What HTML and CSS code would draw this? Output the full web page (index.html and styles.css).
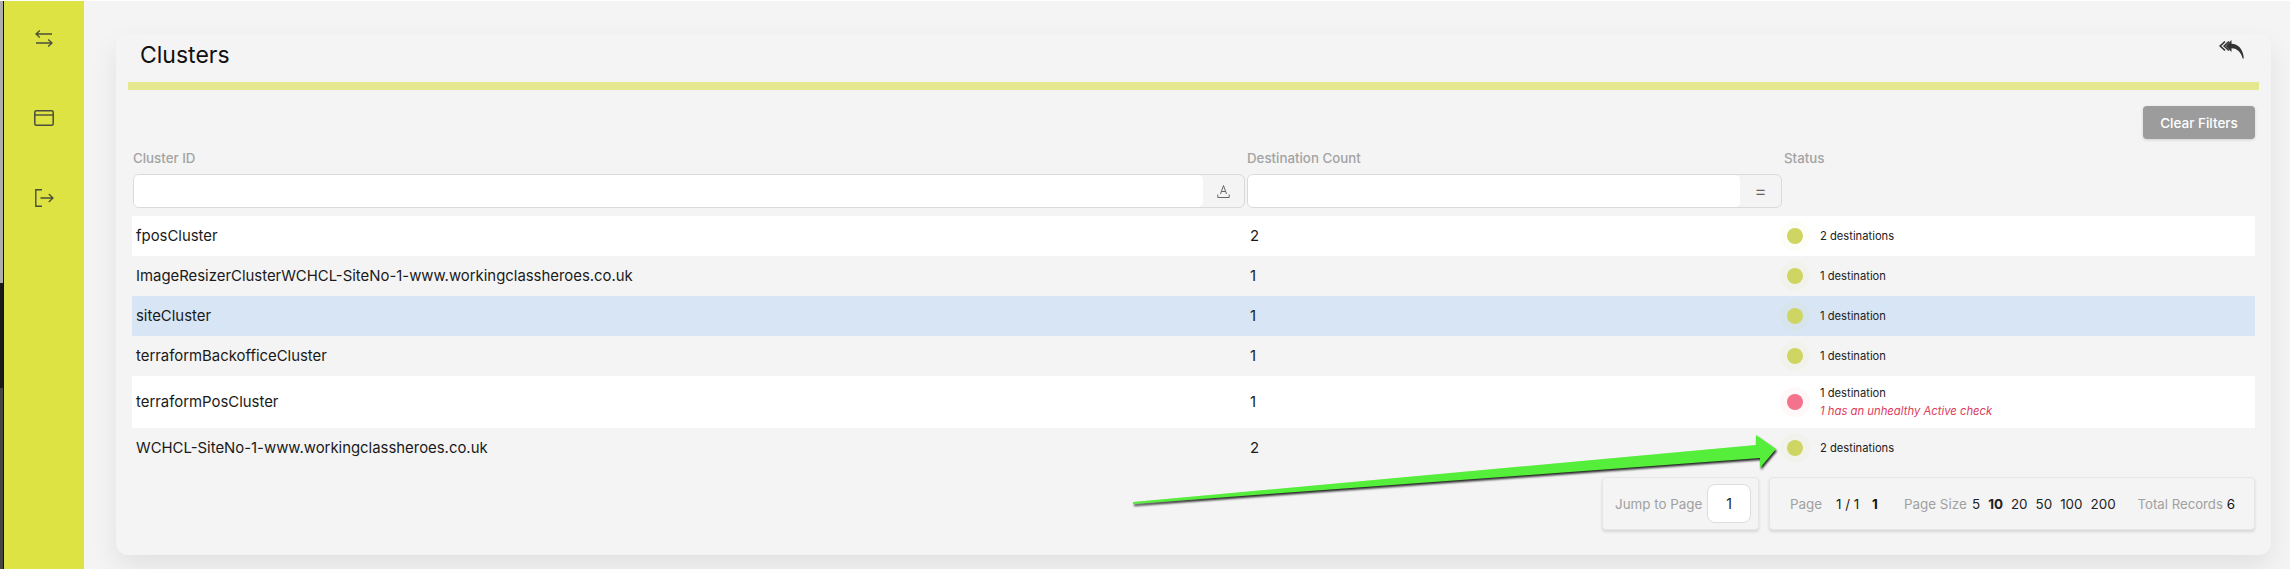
FILE: index.html
```html
<!DOCTYPE html>
<html lang="en">
<head>
<meta charset="utf-8">
<title>Clusters</title>
<link rel="stylesheet" href="styles.css">
</head>
<body>
<div class="edge"></div>
<nav class="sidebar">
  <a class="nav-icon nav-first"><svg width="18" height="17" viewBox="0 0 18 17"><path d="M4.800 .6 1 4.000 4.800 7.400M1 4.000H17M13.200 9.600 17 13 13.200 16.400M17 13H1" fill="none" stroke="#4a4e3a" stroke-width="1.300"/></svg></a>
  <a class="nav-icon"><svg width="20" height="16" viewBox="0 0 20 16"><rect x=".8" y=".8" width="18.400" height="14.400" rx="1.500" fill="none" stroke="#4a4e3a" stroke-width="1.500"/><path d="M.8 5H19.200" stroke="#4a4e3a" stroke-width="1.400"/></svg></a>
  <a class="nav-icon"><svg width="19" height="18" viewBox="0 0 19 18"><path d="M7 .8H.8V17.200H7" fill="none" stroke="#4a4e3a" stroke-width="1.400"/><path d="M5.500 9H18M13.800 5 18 9 13.800 13" fill="none" stroke="#4a4e3a" stroke-width="1.300"/></svg></a>
</nav>
<main class="main">
  <section class="card">
    <header class="card-head">
      <h1 class="title">Clusters</h1>
      <svg class="back" width="25" height="19" viewBox="0 0 25 19"><path d="M6 1.500 1.200 6 6 10.500" fill="none" stroke="#333" stroke-width="1.700"/><path d="M10 1.500 5.200 6 10 10.500" fill="none" stroke="#333" stroke-width="1.700"/><path d="M12.500 0 6.800 6 12.500 12V8.300C17.500 8.300 22 11.500 23.600 18.500L24.800 18.500C24.300 9 19 4 12.500 3.800Z" fill="#333"/></svg>
    </header>
    <div class="bar"></div>
    <div class="toolbar"><button class="clear">Clear Filters</button></div>
    <div class="grid-head">
      <div class="col col-id">
        <div class="label">Cluster ID</div>
        <div class="filter"><div class="filter-input"></div><div class="filter-op"><svg width="13" height="15" viewBox="0 0 13 15"><path d="M3.500 10 6.500 1.500 9.500 10M4.500 7.500H8.500" fill="none" stroke="#666" stroke-width="1"/><path d="M.8 10.500V13.500H12.200V10.500" fill="none" stroke="#666" stroke-width="1"/></svg></div></div>
      </div>
      <div class="col col-count">
        <div class="label">Destination Count</div>
        <div class="filter"><div class="filter-input"></div><div class="filter-op eq">=</div></div>
      </div>
      <div class="col col-status">
        <div class="label">Status</div>
      </div>
    </div>
    <div class="rows">
      <div class="row alt"><div class="cell-id">fposCluster</div><div class="cell-count">2</div><div class="cell-status"><span class="dot ok"></span><div class="status-text">2 destinations</div></div></div>
      <div class="row"><div class="cell-id">ImageResizerClusterWCHCL-SiteNo-1-www.workingclassheroes.co.uk</div><div class="cell-count">1</div><div class="cell-status"><span class="dot ok"></span><div class="status-text">1 destination</div></div></div>
      <div class="row selected"><div class="cell-id">siteCluster</div><div class="cell-count">1</div><div class="cell-status"><span class="dot ok"></span><div class="status-text">1 destination</div></div></div>
      <div class="row"><div class="cell-id">terraformBackofficeCluster</div><div class="cell-count">1</div><div class="cell-status"><span class="dot ok"></span><div class="status-text">1 destination</div></div></div>
      <div class="row alt tall"><div class="cell-id">terraformPosCluster</div><div class="cell-count">1</div><div class="cell-status"><span class="dot bad"></span><div class="status-text">1 destination<div class="warn">1 has an unhealthy Active check</div></div></div></div>
      <div class="row"><div class="cell-id">WCHCL-SiteNo-1-www.workingclassheroes.co.uk</div><div class="cell-count">2</div><div class="cell-status"><span class="dot ok"></span><div class="status-text">2 destinations</div></div></div>
    </div>
    <footer class="pager">
      <div class="pager-box jump"><span class="muted">Jump to Page</span><span class="jump-input">1</span></div>
      <div class="pager-box info">
        <span class="muted page-lbl">Page</span><span class="val pg">1 / 1</span><b class="val one">1</b>
        <span class="muted size">Page Size</span>
        <span class="val s">5</span><b class="val s">10</b><span class="val s">20</span><span class="val s">50</span><span class="val s">100</span><span class="val s">200</span>
        <span class="muted total">Total Records</span><span class="val six">6</span>
      </div>
    </footer>
  </section>
</main>
<svg class="arrow" width="670" height="90" viewBox="0 0 670 90">
  <path d="M1 72 624 15 624 5 644 19 628 38 628 28 1 74Z" fill="#55ee3a"/>
</svg>
</body>
</html>
```
FILE: styles.css
```css
* { box-sizing: border-box; }
html, body { margin: 0; height: 569px; overflow: hidden; }
body { display: flex; padding-top: 1px; font-family: "Inter", "Liberation Sans", sans-serif; background: #fff; color: #111; position: relative; }
.edge { width: 4px; flex: none; border-right: 1px solid #111; background: linear-gradient(#adadad 0 282px, #1a1a1a 282px 387px, #444 387px); }
.sidebar { width: 80px; flex: none; background: #dde343; display: flex; flex-direction: column; align-items: center; padding-top: 29px; gap: 63px; }
.nav-icon { display: flex; }
.main { flex: 1; background: #f4f4f4; padding: 33px 19px 14px 32px; }
.card { height: 521px; background: #f4f4f4; border-radius: 12px; box-shadow: 0 12px 28px rgba(0,0,0,.08); padding: 0 12px; }
.card-head { height: 48px; display: flex; justify-content: space-between; align-items: flex-start; padding: 5px 15px 0 12px; }
.title { margin: 0; font-size: 23px; line-height: 32px; font-weight: 400; color: #111; }
.back { margin-top: 1px; }
.bar { height: 8px; background: #e6e88f; }
.toolbar { display: flex; justify-content: flex-end; padding: 16px 4px 0 0; height: 49px; }
.clear { width: 112px; height: 33px; border: 0; border-radius: 4px; background: #9c9c9c; color: #fff; font: 500 13.500px "Inter", "Liberation Sans", sans-serif; box-shadow: 0 1px 3px rgba(0,0,0,.15); }
.grid-head { display: flex; padding-left: 5px; height: 77px; }
.col-id { width: 1114px; }
.col-count { width: 537px; }
.label { height: 35px; font-size: 13.300px; line-height: 18px; padding-top: 10px; color: #a3a3a3; font-weight: 500; }
.filter { display: flex; height: 34px; border: 1px solid #dadada; border-radius: 6px; width: calc(100% - 2px); }
.filter-input { flex: 1; background: #fff; border-radius: 5px; }
.filter-op { width: 41px; display: flex; align-items: center; justify-content: center; color: #666; font-size: 20px; font-weight: 300; }
.rows { display: flex; flex-direction: column; margin: 0 4px; }
.row { height: 40px; display: flex; align-items: center; font-size: 14.900px; color: #1a1a1a; padding-left: 4px; }
.row.alt { background: #fff; }
.row.selected { background: #d8e5f4; }
.row.tall { height: 52px; }
.cell-id { width: 1114px; }
.cell-count { width: 537px; }
.cell-status { display: flex; align-items: center; }
.dot { width: 16px; height: 16px; border-radius: 50%; margin-right: 17px; }
.dot.ok { background: #ced563; box-shadow: 0 0 0 7px rgba(206,213,99,.05); }
.dot.bad { background: #f5728c; box-shadow: 0 0 0 7px rgba(245,114,140,.05); }
.status-text { font-size: 11.200px; line-height: 18px; color: #222; }
.warn { font-size: 11.300px; font-style: italic; color: #dc3b5c; }
.pager { display: flex; justify-content: flex-end; gap: 10px; margin: 9px 4px 0 0; }
.pager-box { height: 53px; display: flex; align-items: center; font-size: 13.400px; background: #f4f4f4; border: 1px solid #e6e6e6; border-radius: 4px; box-shadow: 0 2px 3px rgba(0,0,0,.12); }
.jump { padding: 0 7px 0 12px; justify-content: space-between; width: 157px; }
.info { width: 486px; padding-left: 20px; }
.muted { color: #a0a0a0; }
.val { color: #222; }
.jump-input { width: 44px; height: 39px; background: #fff; border: 1px solid #ddd; border-radius: 8px; display: flex; align-items: center; justify-content: center; font-size: 14px; color: #222; }
.page-lbl { width: 46px; }
.pg { width: 36px; }
.one { width: 32px; color: #111; }
.size { width: 68px; }
.s { margin-right: 8px; }
.total { margin-left: 14px; margin-right: 4px; font-size: 13.200px; }
.six { color: #111; }
.arrow { position: absolute; left: 1132px; top: 430px; filter: drop-shadow(1px 2px 1px #222); }
```
